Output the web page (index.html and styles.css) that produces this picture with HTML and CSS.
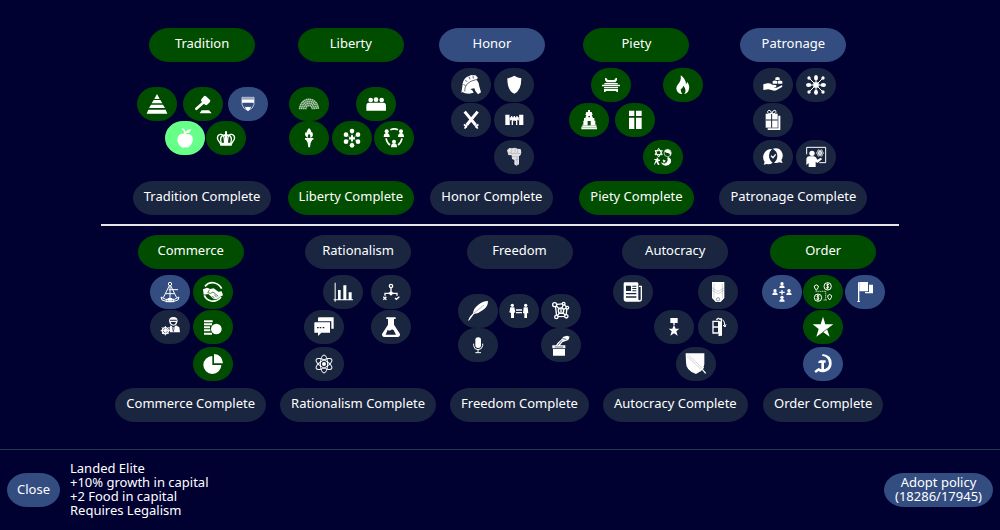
FILE: index.html
```html
<!DOCTYPE html>
<html lang="en">
<head>
<meta charset="utf-8">
<meta name="viewport" content="width=device-width, initial-scale=1">
<title>Policies</title>
<link rel="stylesheet" href="styles.css">
</head>
<body>
<main class="policies">
  <div class="board">
    <div class="branches">
      <section class="branch">
        <button class="pill title adopted">Tradition</button>
        <div class="tree tradition short">
          <button class="node adopted c1 r1" aria-label="Aristocracy"><svg viewBox="0 0 60 60"><path d="M30 0l8 15H22zM20 18h20l6 10H14zM12 32h36l6 10H6zM4 47h52l5 12H-1z"/></svg></button>
          <button class="node adopted c3 r1" aria-label="Legalism"><svg viewBox="0 0 60 60"><path d="M34 5l5 2 13 12-1 5-10 10-5-2-3-3-22 20-4-2-1-4 21-19-3-4 1-4zM26 49h22l8 9H20z"/></svg></button>
          <button class="node open c5 r1" aria-label="Oligarchy"><svg viewBox="0 0 60 60"><path class="ln" stroke-width="2" d="M12 10h36v21q-1 12-18 19-17-7-18-19z"/><path d="M12 13h36v13H12zM20 37l5 3 5-2 5 2 5-3-4 9-6 5-6-5z"/><path class="dk" stroke-width="2" d="M12 15h36"/></svg></button>
          <button class="node selected c2 r2" aria-label="Landed Elite"><svg viewBox="0 0 60 60"><path d="M28 17Q28 8 20 3l3-3q8 5 9 12 5-9 17-8-3 12-16 12l-2 3q13-4 20 5 7 12-3 26-8 12-18 8-10 4-18-8Q3 35 10 24q7-9 18-7z"/></svg></button>
          <button class="node adopted c4 r2" aria-label="Monarchy"><svg viewBox="0 0 60 60"><path class="ln" stroke-width="4" d="M13 46L5 34q-3-12 8-15 9-1 11 8l2 18M47 46l8-12q3-12-8-15-9-1-11 8l-2 18M16 44q-6-15 4-22M44 44q6-15-4-22"/><path d="M27 10h6v9h4v5h-4v22h-6V24h-4v-5h4zM11 44h38l-2 9H13z"/></svg></button>
        </div>
        <button class="pill locked">Tradition Complete</button>
      </section>
      <section class="branch">
        <button class="pill title adopted">Liberty</button>
        <div class="tree liberty short">
          <button class="node adopted c1 r1" aria-label="Collective Rule"><svg viewBox="0 0 60 60"><g class="ln soft" stroke-width="5" stroke-dasharray="5 1"><path d="M2 46a28 30 0 0 1 56 0"/><path d="M8 46a22 24 0 0 1 44 0"/><path d="M14 46a16 18 0 0 1 32 0"/><path d="M20 46a10 12 0 0 1 20 0"/></g></svg></button>
          <button class="node adopted c3 r1" aria-label="Republic"><svg viewBox="0 0 60 60"><circle cx="14" cy="18" r="7"/><circle cx="30" cy="17" r="7"/><circle cx="47" cy="18" r="7"/><path d="M1 50V35q0-9 8-9h43q8 0 8 9v15z"/></svg></button>
          <button class="node adopted c1 r2" aria-label="Representation"><svg viewBox="0 0 60 60"><path d="M30 0q10 9 5 14l4-3q6 11-1 17l-6 1q5-6-2-12-6 6-2 12-9-1-10-10 0-5 3-8l3 4Q22 8 30 0zM18 30h25v5h-3l-5 9-2 14h-5l-2-14-5-9h-3z"/></svg></button>
          <button class="node adopted c2 r2" aria-label="Citizenship"><svg viewBox="0 0 60 60"><circle cx="30" cy="9" r="7"/><circle cx="12" cy="20" r="7"/><circle cx="48" cy="20" r="7"/><circle cx="12" cy="41" r="7"/><circle cx="48" cy="41" r="7"/><circle cx="30" cy="52" r="7"/><path d="M27 22h6v6h6v6h-6v6h-6v-6h-6v-6h6z"/><path class="ln" stroke-width="2" stroke-dasharray="4 2" d="M30 9v43M12 20l36 21M48 20L12 41"/></svg></button>
          <button class="node adopted c4 r2" aria-label="Meritocracy"><svg viewBox="0 0 60 60"><path class="ln" stroke-width="5" d="M19 5q12-5 23 0M6 31q3 14 12 20M54 31q-3 14-12 20"/><circle cx="8" cy="10" r="6"/><circle cx="51" cy="10" r="6"/><circle cx="30" cy="41" r="6"/><path d="M-1 27q0-12 9-12t9 12zM42 27q0-12 9-12t9 12zM21 58q0-12 9-12t9 12z"/></svg></button>
        </div>
        <button class="pill adopted">Liberty Complete</button>
      </section>
      <section class="branch">
        <button class="pill title open">Honor</button>
        <div class="tree pair">
          <button class="node locked c1 r1" aria-label="Warrior Code"><svg viewBox="0 0 60 60"><path d="M1 54L4 34Q4 16 17 6L31 0l13 1 7 8-6 5q9 6 9 17l6 21-9 6-8-10-3-8-12 2q8 4 10 11l-14 3-12-1-8-4z"/><path class="dk" stroke-width="2" d="M11 49q-1-28 34-35M7 28l7 4M13 15l6 6M24 5l3 8M36 2l1 9"/></svg></button>
          <button class="node locked c2 r1" aria-label="Discipline"><svg viewBox="0 0 60 60"><path d="M31 2q10 6 21 8 0 38-21 46Q10 48 10 10q11-2 21-8z"/></svg></button>
          <button class="node locked c1 r2" aria-label="Military Tradition"><svg viewBox="0 0 60 60"><path class="ln" stroke-width="9" d="M11 5l33 40M50 5L17 45"/><path class="ln" stroke-width="5" d="M9 43l9 9M52 43l-9 9M17 45l-6 11M44 45l6 11"/></svg></button>
          <button class="node locked c2 r2" aria-label="Military Caste"><svg viewBox="0 0 60 60"><path d="M4 14h13v8h4v-4h4v4h4v-4h4v4h4v-4h4v4h4v-8h13v31H45V34q0-5-5-5v16h-4V32h-9v13h-4V29q-5 0-5 5v11H4z"/><path class="dk" stroke-width="1" d="M17 15v29M45 15v29"/></svg></button>
          <button class="node locked c2 r3" aria-label="Professional Army"><svg viewBox="0 0 60 60"><path class="pale" d="M9 10l7-7 8 1 9-2 7 3 10 1 2 10-2 8-5 4v24l-8 4-6-4V39l-7-3-1-11-10-1z"/><path class="dk faint" stroke-width="2" d="M11 18h11M23 7v13h27M33 5v13M41 7v11M24 29h20M33 39l11-2M39 30v24"/></svg></button>
        </div>
        <button class="pill locked">Honor Complete</button>
      </section>
      <section class="branch">
        <button class="pill title adopted">Piety</button>
        <div class="tree piety">
          <button class="node adopted c2 r1" aria-label="Organized Religion"><svg viewBox="0 0 60 60"><path d="M12 9l5 1 3 5h20l3-5 5-1v7l-5 6H17l-5-6zM10 24h40v4H10zM3 29h54v5H3zM9 36h42v4H9zM9 42h42v9h-5v-3H14v3H9z"/></svg></button>
          <button class="node adopted c5 r1" aria-label="Mandate Of Heaven"><svg viewBox="0 0 60 60"><path d="M23 1q15 10 16 27 3-3 3-8 9 11 6 22-3 13-14 15 9-11-3-25-2 9-8 11 0 8 5 14Q12 56 10 41q0-9 8-17 7-8 5-23z"/></svg></button>
          <button class="node adopted c1 r2" aria-label="Theocracy"><svg viewBox="0 0 60 60"><path d="M27 0h6v6h5l3 9h-3l4 9h4v8h3v12h3v6h2v8H7v-8h3v-6h3V32h2v-8h4l3-9h-3l3-9h5z"/><path class="cut" d="M26 33h9v13h-9zM28 18h5v4h-5z"/><path class="dk" stroke-width="1" d="M10 47h42M7 53h47"/></svg></button>
          <button class="node adopted c3 r2" aria-label="Reformation"><svg viewBox="0 0 60 60"><path d="M12 2h16v16H12zM33 2h17v16H33zM12 23h16v34H12zM33 23h17v34H33z"/></svg></button>
          <button class="node adopted c4 r3" aria-label="Religious Tolerance"><svg viewBox="0 0 60 60"><path class="ln" stroke-width="3" d="M17 4l11 19H6zM17 30L6 11h22z"/><circle class="ln" stroke-width="2" cx="44" cy="18" r="11"/><path d="M36 10q8-5 14 0 7 8 2 16-2-9-8-8-9 0-8-8zM4 36h8l-2-4h6l-1 5 6 1v4l-6 1 5 11h-5l-5-9-5 8H3l5-14-5-1z"/><path d="M46 30q12 6 7 18-8 12-21 7-7-3-8-9 10 6 16 1 7-8 2-14zM31 37l3 3 4-1-2 4 2 4-4-2-4 2 1-4-3-3h3z"/></svg></button>
        </div>
        <button class="pill adopted">Piety Complete</button>
      </section>
      <section class="branch">
        <button class="pill title open">Patronage</button>
        <div class="tree pair">
          <button class="node locked c1 r1" aria-label="Philanthropy"><svg viewBox="0 0 60 60"><path d="M1 28l12-3q8-1 15 4l10 1q5 2 1 6l-8 1 10 1 15-7q4 1 1 5L40 46q-6 2-12 0l-12-3L1 45z"/><path d="M37 8l6-2 7 2v7H37zM29 19q6-4 13-1v8H29zM44 18q7-3 14 1v7H44z"/></svg></button>
          <button class="node locked c2 r1" aria-label="Consulates"><svg viewBox="0 0 60 60"><path d="M22 22h16v16H22z"/><path class="ln" stroke-width="3" d="M30 8v44M8 30h44M9 9l42 42M51 9L9 51"/><ellipse cx="30" cy="8" rx="6" ry="8"/><ellipse cx="30" cy="52" rx="6" ry="8"/><ellipse cx="8" cy="30" rx="8" ry="6"/><ellipse cx="52" cy="30" rx="8" ry="6"/><circle cx="9" cy="9" r="5"/><circle cx="51" cy="9" r="5"/><circle cx="9" cy="51" r="5"/><circle cx="51" cy="51" r="5"/></svg></button>
          <button class="node locked c1 r2" aria-label="Scholasticism"><svg viewBox="0 0 60 60"><path d="M8 11h36v42H8z"/><path d="M46 17h6v43H14v-5h32z"/><path class="ln" stroke-width="3" d="M26 11q-14 1-12-7 3-6 9-1l3 8 4-8q7-5 9 1 1 8-13 7"/><path class="dk" stroke-width="3" d="M26 12v41M8 30h36"/></svg></button>
          <button class="node locked c1 r3" aria-label="Cultural Diplomacy"><svg viewBox="0 0 60 60"><path d="M27 6q-9 8-9 20t11 21q-8 6-18 4l-9 2 3-8Q-4 32 4 18q8-13 23-12zM29 5q19-5 27 9 7 13-1 25l4 9-10-2q-9 4-16 1 10-8 10-21T29 5z"/><path class="ln" stroke-width="4" d="M24 26l6 6 8-10"/></svg></button>
          <button class="node locked c2 r3" aria-label="Educated Elite"><svg viewBox="0 0 60 60"><path class="ln" stroke-width="3" d="M2 22V1h57v46H40"/><circle cx="18" cy="19" r="8"/><path d="M1 54V38q0-9 9-10h14q6 1 10 10l11-6 3 5-14 11-5-4v16H8V48z"/><g class="ln" stroke-width="2"><circle cx="42" cy="18" r="3"/><ellipse cx="42" cy="18" rx="11" ry="4"/><ellipse cx="42" cy="18" rx="11" ry="4" transform="rotate(60 42 18)"/><ellipse cx="42" cy="18" rx="11" ry="4" transform="rotate(120 42 18)"/></g></svg></button>
        </div>
        <button class="pill locked">Patronage Complete</button>
      </section>
    </div>
    <hr class="divider">
    <div class="branches late">
      <section class="branch">
        <button class="pill title adopted">Commerce</button>
        <div class="tree pair">
          <button class="node open c1 r1" aria-label="Naval Tradition"><svg viewBox="0 0 60 60"><g class="ln" stroke-width="3"><circle cx="30" cy="6" r="5"/><path d="M28 11L10 47M32 11l18 36M30 11v42M26 23h28M18 35h24M3 45q27 18 54 0l-3 9q-24 10-48 0zM20 52l-2 7h24l-2-7"/></g><path d="M23 48h14v8H23z"/></svg></button>
          <button class="node adopted c2 r1" aria-label="Trade Unions"><svg viewBox="0 0 60 60"><path class="ln" stroke-width="5" d="M6 13q12-14 29-10 15 4 21 17M54 45q-12 15-29 12-15-3-21-17"/><path d="M0 22l12-5 10 4 10-2 14 10 10-1 4 12-11 6-7 5-9 1-17-16L2 38z"/><path class="dk" stroke-width="2" d="M20 23l-6 9 9 2 7-4 16 13M28 42l7 7M34 38l7 8"/></svg></button>
          <button class="node locked c1 r2" aria-label="Merchant Navy"><svg viewBox="0 0 60 60"><circle class="ln" stroke-width="4" cx="16" cy="41" r="9"/><circle cx="16" cy="41" r="4"/><path class="ln" stroke-width="3" d="M16 27v28M2 41h28M6 31l20 20M26 31L6 51"/><path d="M27 12q0-12 13-12t13 12l-3 9q-10 11-20 0zM32 25l8 7 8-7 10 6 2 15H30l-2-14z"/><path class="cut" d="M30 8h20v3H30zM32 15h16q-2 8-8 8t-8-8z"/><path class="dk" stroke-width="2" d="M37 31l3 13 3-13"/></svg></button>
          <button class="node adopted c2 r2" aria-label="Mercantilism"><svg viewBox="0 0 60 60"><path d="M3 10h26v6H3zM3 19h24v6H3zM3 28h18v6H3zM3 37h19v6H3zM3 47h24v6H3z"/><circle cx="40" cy="36" r="16"/></svg></button>
          <button class="node adopted c2 r3" aria-label="Protectionism"><svg viewBox="0 0 60 60"><path d="M28 6v27h27A27 27 0 1 1 28 6zM33 0q25 2 27 28H33z"/></svg></button>
        </div>
        <button class="pill locked">Commerce Complete</button>
      </section>
      <section class="branch">
        <button class="pill title locked">Rationalism</button>
        <div class="tree rationalism">
          <button class="node locked c2 r1" aria-label="Secularism"><svg viewBox="0 0 60 60"><path d="M5 2h3v50h52v3H8v4H5v-4H2v-3h3zM15 24h8v28h-8zM31 10h9v42h-9zM47 31h9v21h-9z"/></svg></button>
          <button class="node locked c3 r1" aria-label="Humanism"><svg viewBox="0 0 60 60"><circle class="ln" stroke-width="4" cx="30" cy="12" r="5"/><path class="ln" stroke-width="4" d="M30 17v11M12 41v-7h36v7M7 44l9 9M16 44l-9 9M42 48l4 4 9-8"/><path d="M30 26l8 8-8 7-8-7z"/></svg></button>
          <button class="node locked c1 r2" aria-label="Free Thought"><svg viewBox="0 0 60 60"><path d="M14 1h45v34h-7V13H12V3zM2 16h46v31H22L12 57V47H1V18z"/><path class="cut" d="M9 30h5v4H9zM17 30h5v4h-5zM26 30h5v4h-5z"/></svg></button>
          <button class="node locked c3 r2" aria-label="Sovereignty"><svg viewBox="0 0 60 60"><path d="M16 1h28v5h-5v17l18 28q1 8-7 9H10q-8-1-7-9l18-28V6h-5z"/><path class="cut" d="M20 38q5 5 11 0 5-1 7 2l7 13H14z"/></svg></button>
          <button class="node locked c1 r3" aria-label="Scientific Revolution"><svg viewBox="0 0 60 60"><g class="ln" stroke-width="3"><ellipse cx="30" cy="30" rx="11" ry="27"/><ellipse cx="30" cy="30" rx="11" ry="27" transform="rotate(60 30 30)"/><ellipse cx="30" cy="30" rx="11" ry="27" transform="rotate(120 30 30)"/></g><circle cx="30" cy="30" r="6"/></svg></button>
        </div>
        <button class="pill locked">Rationalism Complete</button>
      </section>
      <section class="branch">
        <button class="pill title locked">Freedom</button>
        <div class="tree triple short">
          <button class="node locked c1 r1" aria-label="Constitution"><svg viewBox="0 0 60 60"><path d="M60 0q0 18-15 27-11 9-27 12L4 58l-4 1q5-13 15-22 1-15 16-26Q43 1 60 0z"/><path class="dk" stroke-width="1" d="M17 37L48 12"/></svg></button>
          <button class="node locked c2 r1" aria-label="Universal Suffrage"><svg viewBox="0 0 60 60"><circle cx="10" cy="13" r="5"/><circle cx="50" cy="13" r="5"/><path d="M4 19h12l3 15-4 2v15H6V36l-5-2zM44 19h12l2 18h-4v14h-8V37h-4zM21 25h18v4H21zM21 33h18v4H21z"/></svg></button>
          <button class="node locked c3 r1" aria-label="Civil Society"><svg viewBox="0 0 60 60"><g class="ln" stroke-width="4"><path d="M13 11l25-3 10 12-3 26-28 1-4-36 17 19L48 20M30 30l16 16M30 30L17 47M38 8l-8 20"/><circle class="fillbg" cx="11" cy="11" r="6"/><circle class="fillbg" cx="38" cy="8" r="4"/><circle class="fillbg" cx="49" cy="20" r="4"/><circle class="fillbg" cx="46" cy="46" r="5"/><circle class="fillbg" cx="16" cy="48" r="5"/><circle class="fillbg" cx="30" cy="29" r="8"/></g><path d="M28 23h4v12h-4z"/></svg></button>
          <button class="node locked c1 r2" aria-label="Free Speech"><svg viewBox="0 0 60 60"><rect x="22" y="7" width="17" height="32" rx="8"/><path class="ln" stroke-width="3" d="M17 26v6q1 12 13 12t14-12v-6M30 44v8M22 53h17"/></svg></button>
          <button class="node locked c3 r2" aria-label="Democracy"><svg viewBox="0 0 60 60"><path d="M4 31h11l5-8 10-9 7-9 11-3 8 3-4 10-10 4-7 2-8 10h16v9H4zM6 42h36v20H6z"/><path class="dk" stroke-width="2" d="M20 31l13-15M34 11l12 2M11 36h26"/></svg></button>
        </div>
        <button class="pill locked">Freedom Complete</button>
      </section>
      <section class="branch">
        <button class="pill title locked">Autocracy</button>
        <div class="tree autocracy">
          <button class="node locked c1 r1" aria-label="Populism"><svg viewBox="0 0 60 60"><path d="M2 5q0-4 4-4h36q4 0 4 4v45q0 5 4 5 3 0 3-5V15h-5v-4h9v41q0 7-8 7H10q-8 0-8-7z"/><path class="cut" d="M9 11h15v16H9zM28 11h12v3H28zM28 18h12v3H28zM28 25h12v3H28zM9 33h31v4H9zM9 43h31v4H9z"/></svg></button>
          <button class="node locked c4 r1" aria-label="Militarism"><svg viewBox="0 0 60 60"><path d="M12 0h37v48L38 60H23L12 48z"/><path class="dk faint" stroke-width="2" d="M12 17l18 12 19-12M12 24l18 12 19-12M18 5v43M43 5v43"/><circle class="dk soft" stroke-width="2" cx="30" cy="52" r="5"/></svg></button>
          <button class="node locked c2 r2" aria-label="Fascism"><svg viewBox="0 0 60 60"><path d="M19 3h22v15H19zM28 18h4v6h-4zM30 23l5 12h11l-9 8 4 13-11-7-11 7 4-13-9-8h11z"/></svg></button>
          <button class="node locked c4 r2" aria-label="Police State"><svg viewBox="0 0 60 60"><path class="ln" stroke-width="4" d="M15 13h17v35H15zM15 30h17M33 6h7v48h-9M25 8l8-5"/><path d="M33 12l8 2v40l-8 4z"/><path class="ln" stroke-width="3" d="M44 8q6 3 7 22M45 24l6 6 3-8"/></svg></button>
          <button class="node locked c3 r3" aria-label="Total War"><svg viewBox="0 0 60 60"><path d="M-1-2h56v33q-2 18-25 29Q-1 50 0 25z"/><path class="dk faint" stroke-width="2" d="M3 7l45 42M7 3l45 42"/><path class="ln" stroke-width="4" d="M41 52l12-12M49 46l10 12"/></svg></button>
        </div>
        <button class="pill locked">Autocracy Complete</button>
      </section>
      <section class="branch">
        <button class="pill title adopted">Order</button>
        <div class="tree triple">
          <button class="node open c1 r1" aria-label="United Front"><svg viewBox="0 0 60 60"><circle cx="30" cy="5" r="5"/><path d="M22 18q0-8 8-8t8 8z"/><circle cx="9" cy="26" r="5"/><path d="M1 39q0-8 8-8t8 8z"/><circle cx="51" cy="26" r="5"/><path d="M43 39q0-8 8-8t8 8z"/><circle cx="30" cy="46" r="5"/><path d="M22 59q0-8 8-8t8 8zM28 24h4v5h6v4h-6v5h-4v-5h-6v-4h6z"/></svg></button>
          <button class="node adopted c2 r1" aria-label="Planned Economy"><svg viewBox="0 0 60 60"><g class="ln" stroke-width="3"><circle cx="44" cy="13" r="11"/><circle cx="15" cy="47" r="11"/><path d="M10 25q-7-8-6-13 6-7 12 0 1 5-6 13zM50 54q-7-8-6-13 6-7 12 0 1 5-6 13z"/><path stroke-dasharray="3 3" d="M8 28h30v26M32 54h12"/><path d="M48 8q-8-3-7 2 7 4 6 6-2 4-8 1M44 4v18M19 42q-8-3-7 2 7 4 6 6-2 4-8 1M15 38v18"/></g></svg></button>
          <button class="node open c3 r1" aria-label="Nationalism"><svg viewBox="0 0 60 60"><path d="M9 1h4v56h2v3H7v-3h2z"/><path d="M13 0h26v28H13zM42 8h12v26H30v-4h12z"/></svg></button>
          <button class="node adopted c2 r2" aria-label="Socialism"><svg viewBox="0 0 60 60"><path d="M30-1l7 23h24L42 36l8 23-20-14-20 14 7-23L-1 22h24z"/><path class="dk" stroke-width="2" d="M30 45l12-9"/></svg></button>
          <button class="node open c2 r3" aria-label="Communism"><svg viewBox="0 0 60 60"><path d="M29 0q27 3 27 28 0 17-15 24-13 6-25-1l-7 6-5-5 7-6 6-4q9 7 19 3 12-5 12-17Q47 8 27 5z"/><path d="M16 23l5-4h17v7h-5v26h-8V27h-9z"/></svg></button>
        </div>
        <button class="pill locked">Order Complete</button>
      </section>
    </div>
  </div>
</main>
<footer class="footer">
  <button class="pill open">Close</button>
  <p class="details">Landed Elite<br>+10% growth in capital<br>+2 Food in capital<br>Requires Legalism</p>
  <button class="pill open adopt">Adopt policy<br>(18286/17945)</button>
</footer>
</body>
</html>
```

FILE: styles.css
```css
* {
  box-sizing: border-box;
}

body {
  margin: 0;
  min-height: 100vh;
  display: flex;
  flex-direction: column;
  background: #000031;
  color: #fff;
  font: 13px/14px "Noto Sans", "Open Sans", sans-serif;
}

button {
  border: 0;
  color: inherit;
  font: inherit;
  cursor: pointer;
}

.adopted { --fill: #004d00; }
.open { --fill: #334d80; }
.locked { --fill: #1a2640; }
.selected { --fill: #66ff88; }

.pill {
  min-height: 34px;
  padding: 0 11px 4px;
  border-radius: 20px / 17px;
  background: var(--fill);
  white-space: nowrap;
}

.title {
  width: 106px;
  padding-bottom: 3px;
}

.policies {
  flex: 1;
  display: flex;
  align-items: center;
  justify-content: center;
}

.board {
  padding: 0 14px;
}

.branches {
  display: flex;
  justify-content: center;
  gap: 16px;
}

.late {
  gap: 14px;
}

.branch {
  display: flex;
  flex-direction: column;
  align-items: center;
}

.divider {
  height: 2px;
  margin: 9px -14px;
  border: 0;
  background: #e6e6e6;
}

.tree {
  display: grid;
  grid-template-rows: 35px 37px 34px;
  align-content: center;
  height: 106px;
  margin: 6px 0 7px;
}

.short {
  grid-template-rows: 34px 34px;
}

.tradition { grid-template-columns: 28px 18px 23px 22px 40px; }
.liberty { grid-template-columns: 43px 24px 18px 40px; padding-left: 2px; }
.pair { grid-template-columns: 43px 40px; padding-left: 2px; }
.piety { grid-template-columns: 22px 24px 28px 20px 40px; }
.rationalism { grid-template-columns: 19px 48px 40px; padding-right: 2px; }
.triple { grid-template-columns: 41px 42px 40px; }
.autocracy { grid-template-columns: 41px 22px 22px 40px; }

.c1 { grid-column: 1; }
.c2 { grid-column: 2; }
.c3 { grid-column: 3; }
.c4 { grid-column: 4; }
.c5 { grid-column: 5; }
.r1 { grid-row: 1; }
.r2 { grid-row: 2; }
.r3 { grid-row: 3; }

.node {
  display: flex;
  align-items: center;
  justify-content: center;
  width: 40px;
  height: 34px;
  padding: 0;
  border-radius: 18px / 17px;
  background: var(--fill);
}

.node svg {
  width: 20px;
  height: 20px;
  fill: #fff;
  overflow: visible;
}

.node .ln {
  fill: none;
  stroke: #fff;
}

.node .dk {
  fill: none;
  stroke: var(--fill);
}

.node .cut,
.node .fillbg {
  fill: var(--fill);
}

.node .pale {
  fill: #e4e4e6;
}

.node .soft {
  opacity: 0.7;
}

.node .faint {
  opacity: 0.3;
}

.footer {
  display: flex;
  align-items: center;
  gap: 10px;
  min-height: 81px;
  padding: 0 7px;
  border-top: 1px solid #24384f;
}

.footer .pill {
  padding: 0 10px 3px;
}

.footer .adopt {
  padding: 0 11px 3px;
}

.details {
  flex: 1;
  margin: 0;
  padding-bottom: 3px;
}
```
